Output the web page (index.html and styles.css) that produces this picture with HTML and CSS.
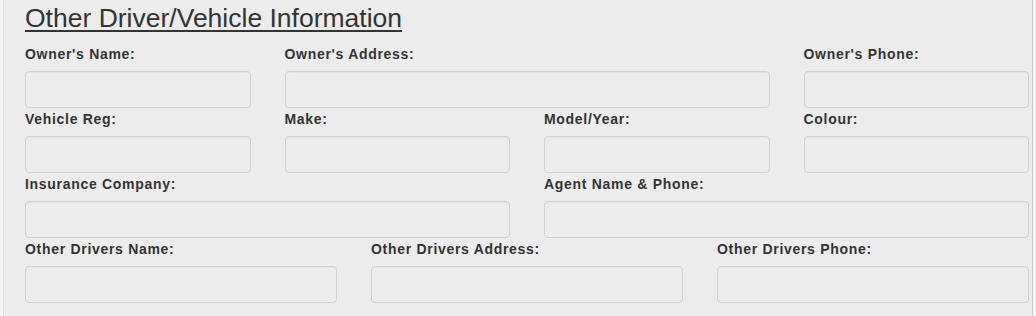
FILE: index.html
```html
<!DOCTYPE html>
<html>
<head>
<meta charset="utf-8">
<link rel="stylesheet" href="styles.css">
</head>
<body>
<div class="panel">
  <h2 class="title">Other Driver/Vehicle Information</h2>
  <div class="grid">
    <div class="field"><label>Owner's Name:</label><input type="text"></div>
    <div class="field span2"><label>Owner's Address:</label><input type="text"></div>
    <div class="field"><label>Owner's Phone:</label><input type="text"></div>

    <div class="field"><label>Vehicle Reg:</label><input type="text"></div>
    <div class="field"><label>Make:</label><input type="text"></div>
    <div class="field"><label>Model/Year:</label><input type="text"></div>
    <div class="field"><label>Colour:</label><input type="text"></div>

    <div class="field span2"><label>Insurance Company:</label><input type="text"></div>
    <div class="field span2"><label>Agent Name &amp; Phone:</label><input type="text"></div>
  </div>
  <div class="grid thirds">
    <div class="field"><label>Other Drivers Name:</label><input type="text"></div>
    <div class="field"><label>Other Drivers Address:</label><input type="text"></div>
    <div class="field"><label>Other Drivers Phone:</label><input type="text"></div>
  </div>
</div>
</body>
</html>
```

FILE: styles.css
```css
html, body {
  margin: 0;
  padding: 0;
  background: #f4f4f4;
  font-family: "Liberation Sans", Arial, sans-serif;
  color: #333;
}

.panel {
  margin-left: 3px;
  width: 1030px;
  box-sizing: border-box;
  min-height: 330px;
  background: #ececec;
  border-left: 1px solid #e2e2e2;
  border-right: 1px solid #c9c9c9;
  padding: 3px 4px 0 21px;
}

.title {
  margin: 0 0 10px 0;
  font-size: 26.5px;
  line-height: 30px;
  font-weight: normal;
  color: #333;
  text-decoration: underline;
  text-decoration-thickness: 2px;
  text-underline-offset: 3px;
}

.grid {
  display: grid;
  grid-template-columns: repeat(4, 1fr);
  column-gap: 34px;
  width: 1004px;
}

.grid.thirds {
  grid-template-columns: repeat(3, 1fr);
}

.span2 {
  grid-column: span 2;
}

.field {
  display: flex;
  flex-direction: column;
}

.field label {
  display: block;
  font-size: 14px;
  letter-spacing: 0.7px;
  line-height: 22px;
  font-weight: bold;
  color: #333;
  margin-bottom: 6px;
}

.field input {
  display: block;
  box-sizing: border-box;
  width: 100%;
  height: 37px;
  margin: 0;
  background: #ececec;
  border: 1px solid #cfcfcf;
  border-radius: 4px;
  box-shadow: inset 0 1px 1px rgba(0,0,0,0.04);
}
```
